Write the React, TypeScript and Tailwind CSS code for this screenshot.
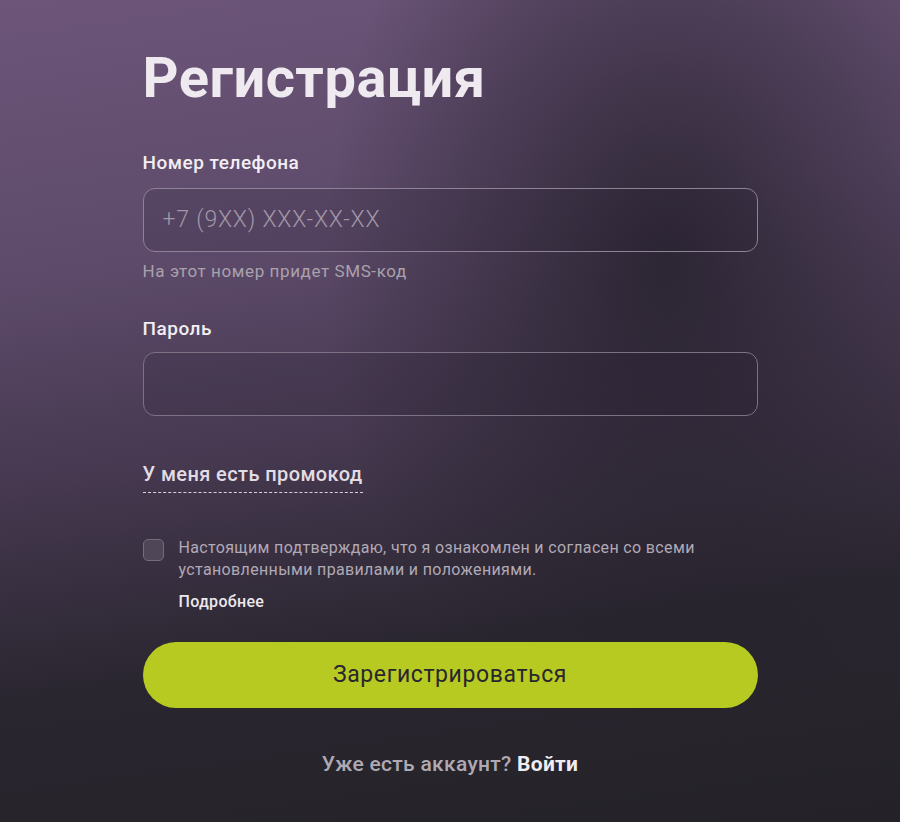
import React from "react";

export default function App() {
  return (
    <div
      className="relative w-full min-h-[822px] overflow-hidden bg-[radial-gradient(ellipse_38%_60%_at_74%_32%,rgba(34,30,40,0.8)_0%,rgba(34,30,40,0)_100%),linear-gradient(172deg,#6c5579_0%,#5d4a6a_30%,#45384f_52%,#2a2630_74%,#242228_100%)]"
      style={{ fontFamily: "Roboto, 'Noto Sans', sans-serif" }}
    >
      <div className="mx-auto flex w-[615px] flex-col pt-[46px]">
        <h1 className="text-[56px] font-bold leading-[64px] tracking-[0.5px] text-[#efeaf0]">
          Регистрация
        </h1>

        <label className="mt-[41px] text-[19px] font-medium leading-[24px] tracking-[0.5px] text-[#f2eef3]">
          Номер телефона
        </label>
        <div className="mt-[13px] flex h-[64px] items-center rounded-[12px] border border-[#8e8296] bg-[rgba(40,34,48,0.18)] px-[19px]">
          <span className="text-[23px] font-light leading-[28px] tracking-[0.8px] text-[#a197a7]">+7 (9XX) XXX-XX-XX</span>
        </div>
        <p className="mt-[9px] text-[17px] leading-[20px] tracking-[0.6px] text-[#aaa1ad]">На этот номер придет SMS-код</p>

        <label className="mt-[36px] text-[19px] font-medium leading-[24px] tracking-[0.5px] text-[#f2eef3]">Пароль</label>
        <div className="mt-[11px] h-[64px] rounded-[12px] border border-[#7c7284] bg-[rgba(40,34,48,0.18)]" />

        <div className="mt-[46px] flex">
          <span className="border-b border-dashed border-[#d8d2da] pb-[6px] text-[20px] font-medium leading-[24px] tracking-[0.4px] text-[#e2dde4]">
            У меня есть промокод
          </span>
        </div>

        <div className="mt-[44px] flex items-start gap-[15px]">
          <div className="mt-[2px] h-[22px] w-[21px] shrink-0 rounded-[5px] border border-[#776c7e] bg-[#4f4658]" />
          <div className="flex flex-col">
            <p className="text-[16px] leading-[22px] tracking-[0.35px] text-[#b1a9b5]">
              Настоящим подтверждаю, что я ознакомлен и согласен со всеми
              <br />
              установленными правилами и положениями.
            </p>
            <span className="mt-[11px] text-[16px] font-medium leading-[20px] tracking-[0.3px] text-[#ece8ee]">Подробнее</span>
          </div>
        </div>

        <button className="mt-[30px] flex h-[66px] w-full items-center justify-center rounded-full bg-[#b6ca22] text-[23px] leading-[28px] tracking-[0.6px] text-[#2a2630]">
          Зарегистрироваться
        </button>

        <p className="mt-[43px] text-center text-[21px] font-medium leading-[26px] tracking-[0.3px] text-[#aeaab3]">
          Уже есть аккаунт? <span className="font-bold text-[#f0edf2]">Войти</span>
        </p>
      </div>
    </div>
  );
}
